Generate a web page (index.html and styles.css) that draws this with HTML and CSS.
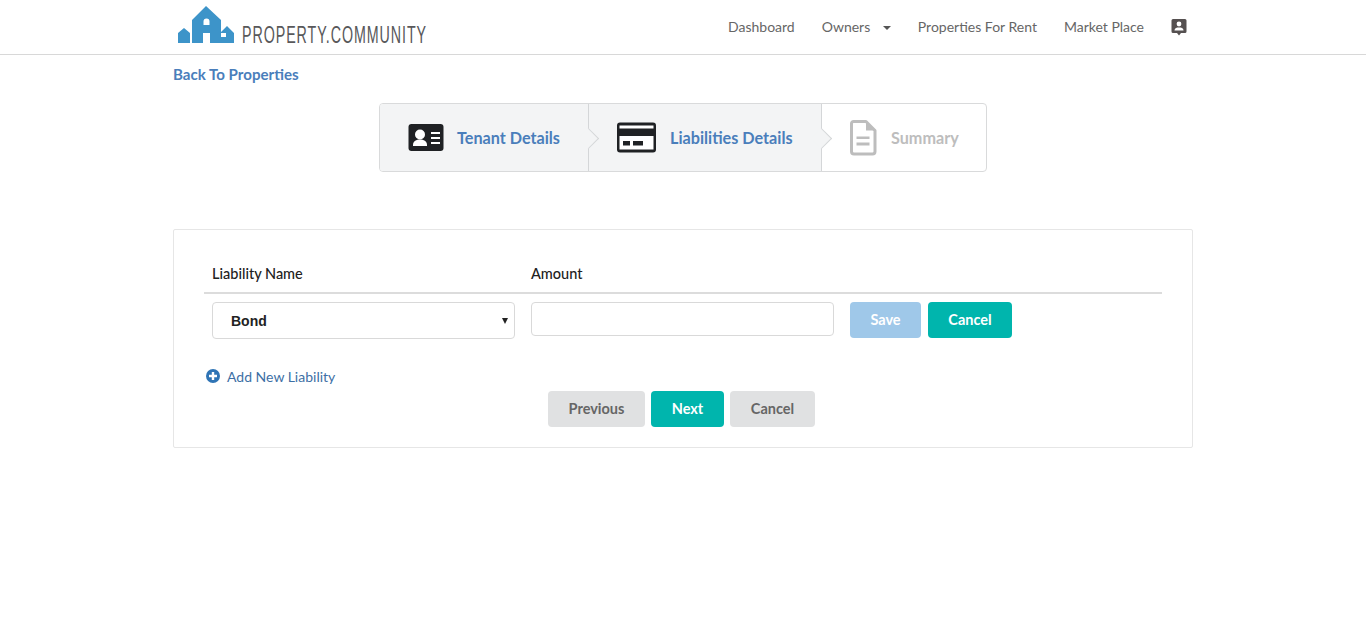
FILE: index.html
```html
<!DOCTYPE html>
<html lang="en">
<head>
<meta charset="utf-8">
<title>Liabilities Details</title>
<link rel="stylesheet" href="styles.css">
</head>
<body>
<header class="topbar">
  <div class="topbar-inner">
    <a class="logo" href="#">
      <svg class="logo-mark" width="58" height="40" viewBox="0 0 58 40"><path fill="#3d94c9" fill-rule="evenodd" d="M1 38V28L7 23L13 28V38ZM15 38V15L29 1L44 15V27L50 21L57 28V38H33V28H26V38ZM26.500 20V16.500A3 3 0 0 1 32.500 16.500V20ZM44 28H49V32H44Z"/></svg>
      <span class="logo-text"><span class="logo-word">PROPERTY.COMMUNITY</span></span>
    </a>
    <nav class="nav">
      <a href="#">Dashboard</a>
      <a href="#" class="nav-owners">Owners <i class="caret"></i></a>
      <a href="#">Properties For Rent</a>
      <a href="#">Market Place</a>
      <svg class="nav-user" width="16" height="18" viewBox="0 0 16 18"><path fill="#555050" d="M2 1H14A1.500 1.500 0 0 1 15.500 2.500V13.500A1.500 1.500 0 0 1 14 15H10L8 17.500L6 15H2A1.500 1.500 0 0 1 .5 13.500V2.500A1.500 1.500 0 0 1 2 1Z"/><circle cx="8" cy="6" r="2.400" fill="#fff"/><path fill="#fff" d="M3.500 12.500C3.500 10 6 9.500 8 9.500S12.500 10 12.500 12.500Z"/></svg>
    </nav>
  </div>
</header>

<main class="page">
  <a class="back" href="#">Back To Properties</a>

  <div class="steps-wrap">
    <ol class="steps">
      <li class="step step-done step-one">
        <svg width="36" height="28" viewBox="0 0 36 28"><rect x=".5" y="0" width="35" height="27" rx="3" fill="#1f2124"/><circle cx="12" cy="10.500" r="5" fill="#fff"/><path fill="#fff" d="M5 21C5 17 8.500 15.500 12 15.500S19 17 19 21V22H5Z"/><path fill="#fff" d="M23 8H32V10H23ZM23 13H32V15H23ZM23 18H32V20H23Z"/></svg>
        <span>Tenant Details</span>
      </li>
      <li class="step step-done step-two">
        <svg width="40" height="32" viewBox="0 0 40 32"><rect x="1" y=".5" width="39" height="30" rx="3" fill="#1f2124"/><rect x="3.500" y="3.500" width="34" height="3" fill="#fff"/><rect x="3.500" y="14" width="34" height="13.500" fill="#fff"/><rect x="7" y="19" width="7" height="4.500" fill="#1f2124"/><rect x="17" y="19" width="10" height="4.500" fill="#1f2124"/></svg>
        <span>Liabilities Details</span>
      </li>
      <li class="step step-todo">
        <svg width="28" height="36" viewBox="0 0 28 36"><path fill="none" stroke="#bdbdbd" stroke-width="3" stroke-linejoin="round" d="M3.500 1.500H16L25 10.500V31.500A2.500 2.500 0 0 1 22.500 34H4A2.500 2.500 0 0 1 1.500 31.500V3.500A2 2 0 0 1 3.500 1.500Z"/><path fill="#bdbdbd" d="M16 1.500V10.500H25ZM6.500 16.500H19.500V19H6.500ZM6.500 22.500H19.500V25.500H6.500Z"/></svg>
        <span>Summary</span>
      </li>
    </ol>
  </div>

  <section class="card">
    <div class="table-head">
      <div class="col-name">Liability Name</div>
      <div class="col-amount">Amount</div>
    </div>
    <div class="table-row">
      <div class="fake-select col-name-field"><span>Bond</span><i class="select-arrow"></i></div>
      <input class="amount-input" type="text" aria-label="Amount">
      <div class="row-actions">
        <button class="btn btn-save" type="button">Save</button>
        <button class="btn btn-teal btn-row-cancel" type="button">Cancel</button>
      </div>
    </div>
    <a class="add-link" href="#">
      <svg width="14" height="14" viewBox="0 0 14 14"><circle cx="7" cy="7" r="7" fill="#2f74b5"/><path fill="#fff" d="M5.800 3H8.200V5.800H11V8.200H8.200V11H5.800V8.200H3V5.800H5.800Z"/></svg>
      <span>Add New Liability</span>
    </a>
    <div class="wizard-actions">
      <button class="btn btn-grey btn-prev" type="button">Previous</button>
      <button class="btn btn-teal btn-next" type="button">Next</button>
      <button class="btn btn-grey btn-wiz-cancel" type="button">Cancel</button>
    </div>
  </section>
</main>
</body>
</html>
```

FILE: styles.css
```css
* { box-sizing: border-box; }
html, body { margin: 0; padding: 0; background: #fff; }
body { font-family: Lato, "Open Sans", sans-serif; font-size: 14px; color: #212121; height: 618px; overflow: hidden; }
a { text-decoration: none; }

.topbar { height: 55px; border-bottom: 1px solid #d8d8d8; }
.topbar-inner { width: 1020px; margin: 0 auto; display: flex; justify-content: space-between; align-items: flex-start; }
.logo { display: flex; align-items: flex-start; padding-left: 4px; }
.logo-mark { display: block; margin-top: 5px; }
.logo-text { display: block; width: 185px; margin: 24px 0 0 7px; height: 22px; overflow: visible; }
.logo-word { display: inline-block; font-family: "Liberation Sans", sans-serif; font-size: 23px; line-height: 22px; letter-spacing: 1.500px; color: #58585a; white-space: nowrap; transform: scaleX(.62); transform-origin: 0 50%; }

.nav { display: flex; align-items: center; height: 54px; margin-right: 5px; }
.nav a { color: #666; font-size: 14px; line-height: 54px; margin-right: 27px; display: block; }
.caret { display: inline-block; width: 0; height: 0; margin-left: 9px; vertical-align: 2px; border-left: 4px solid transparent; border-right: 4px solid transparent; border-top: 4px solid #555; }
.nav-user { display: block; margin-right: 1px; }

.page { width: 1020px; margin: 0 auto; }
.back { display: block; margin-top: 9px; color: #4a7ebb; font-size: 15.100px; font-weight: 700; line-height: 20px; }

.steps-wrap { display: flex; justify-content: center; margin-top: 19px; }
.steps { list-style: none; margin: 0; padding: 0; display: flex; width: 608px; height: 69px; border: 1px solid #d9dadb; border-radius: 4px; }
.step { position: relative; display: flex; align-items: center; font-size: 16.200px; font-weight: 700; color: #4a7ebb; }
.step-done { background: #f3f4f5; border-right: 1px solid #d4d6d8; }
.step-one { width: 209px; padding-left: 28px; border-radius: 3px 0 0 3px; z-index: 2; }
.step-one span { margin-left: 13px; }
.step-two { width: 233px; padding-left: 27px; z-index: 1; }
.step-two span { margin-left: 14px; }
.step-todo { flex: 1; padding-left: 28px; color: #bdbdbd; border-radius: 0 3px 3px 0; }
.step-todo span { margin-left: 13px; }
.step svg { display: block; flex: none; }
.step-done::after { content: ""; position: absolute; right: -8px; top: 27px; width: 14px; height: 14px; background: #f3f4f5; border-top: 1px solid #d4d6d8; border-right: 1px solid #d4d6d8; transform: rotate(45deg); }

.card { margin-top: 57px; height: 219px; border: 1px solid #e6e6e6; border-radius: 2px; padding: 30px 30px 0; }
.table-head { display: flex; height: 34px; border-bottom: 2px solid #dcdcdc; font-size: 14.500px; font-weight: 500; color: #212121; line-height: 28px; }
.col-name { width: 327px; padding-left: 8px; }
.table-row { display: flex; align-items: flex-start; margin-top: 8px; padding-left: 8px; }
.fake-select { position: relative; display: flex; align-items: center; width: 303px; height: 37px; border: 1px solid #d9d9d9; border-radius: 4px; padding-left: 18px; font-family: "Liberation Sans", sans-serif; font-size: 14px; font-weight: 700; color: #222; }
.select-arrow { position: absolute; right: 6px; top: 15px; width: 0; height: 0; border-left: 3px solid transparent; border-right: 3px solid transparent; border-top: 6px solid #222; }
.amount-input { display: block; width: 303px; height: 34px; margin: 0 0 0 16px; border: 1px solid #d9d9d9; border-radius: 4px; background: #fff; padding: 0 12px; }
.row-actions { display: flex; margin-left: 16px; gap: 7px; }
.btn { display: block; height: 36px; border: 0; border-radius: 4px; font-family: Lato, sans-serif; font-size: 14.500px; font-weight: 700; padding: 0 0 1px; }
.btn-save { width: 71px; background: #9fc8e9; color: #fff; }
.btn-teal { background: #00b5ad; color: #fff; }
.btn-row-cancel { width: 84px; }
.add-link { display: flex; align-items: center; margin-top: 27px; margin-left: 2px; height: 20px; color: #3d6fa5; font-size: 14px; }
.add-link svg { display: block; margin-right: 7px; }
.wizard-actions { display: flex; gap: 6px; margin-top: 5px; padding-left: 344px; }
.btn-grey { background: #e0e1e2; color: #666; }
.btn-prev { width: 97px; }
.btn-next { width: 73px; }
.btn-wiz-cancel { width: 85px; }
```
